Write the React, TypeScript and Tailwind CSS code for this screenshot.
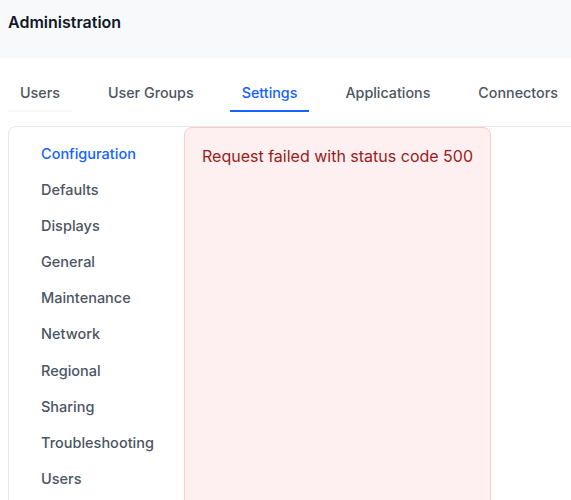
import React from 'react';

const tabs = ['Users', 'User Groups', 'Settings', 'Applications', 'Connectors'];
const menu = [
  'Configuration',
  'Defaults',
  'Displays',
  'General',
  'Maintenance',
  'Network',
  'Regional',
  'Sharing',
  'Troubleshooting',
  'Users',
];

function App() {
  const activeTab = 'Settings';
  const activeItem = 'Configuration';

  return (
    <div className="h-[500px] overflow-hidden bg-white font-['Inter',sans-serif]">
      <header className="h-[58px] bg-[#f8f9fb] px-2 pt-[10px]">
        <h1 className="text-[16px] leading-6 font-semibold text-[#111827]">Administration</h1>
      </header>

      <nav className="mt-4 flex gap-6 pl-2 whitespace-nowrap">
        {tabs.map((tab) => (
          <div
            key={tab}
            className={
              tab === activeTab
                ? 'border-b-2 border-[#1563ff] px-3 pt-[8px] pb-[6px] text-[14.3px] leading-[22px] font-medium text-[#1563ff]'
                : tab === 'Users'
                ? 'border-b-2 border-[#f6f7f8] px-3 pt-[8px] pb-[6px] text-[14.3px] leading-[22px] font-medium text-[#4b5563]'
                : 'border-b-2 border-transparent px-3 pt-[8px] pb-[6px] text-[14.3px] leading-[22px] font-medium text-[#4b5563]'
            }
          >
            {tab}
          </div>
        ))}
      </nav>

      <div className="mt-[14px] ml-2 flex h-[400px] w-[600px] rounded-tl-lg border border-[#e5e7eb]">
        <ul className="w-[175px] shrink-0 pt-[9px] pl-[32px]">
          {menu.map((item) => (
            <li
              key={item}
              className={
                item === activeItem
                  ? 'py-2 text-[14.5px] leading-[20.1px] font-medium text-[#1563ff]'
                  : 'py-2 text-[14.5px] leading-[20.1px] font-medium text-[#4b5563]'
              }
            >
              {item}
            </li>
          ))}
        </ul>
        <div className="h-[420px] w-[307px] rounded-lg border border-[#fecaca] bg-[#fef0f0] pt-4 pr-4 pl-[17px]">
          <p className="text-[16px] leading-6 text-[#991b1b]">Request failed with status code 500</p>
        </div>
      </div>
    </div>
  );
}

export default App;
